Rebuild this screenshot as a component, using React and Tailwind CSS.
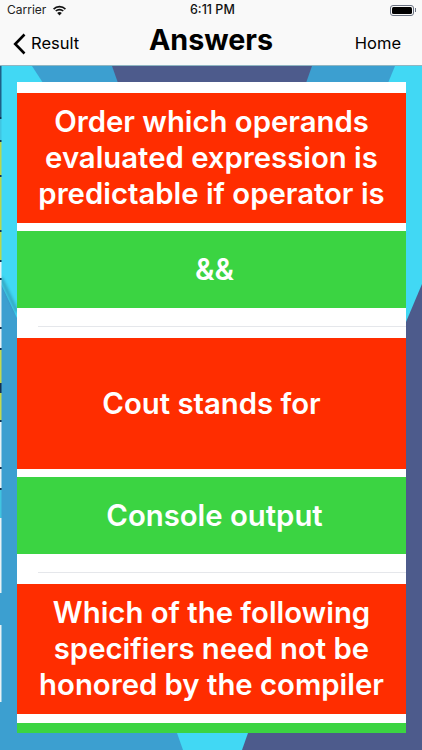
import React from "react";

const font = { fontFamily: "Inter" };

// thin strip of another picture showing along the left edge
const edgeStrip = [
  [0, 51, "#1f5f86"],
  [51, 2, "#14304f"],
  [53, 21, "#41c4e0"],
  [74, 2, "#14304f"],
  [76, 33, "#b9d64e"],
  [109, 2, "#14304f"],
  [111, 53, "#b9d64e"],
  [164, 2, "#14304f"],
  [166, 28, "#b9d64e"],
  [194, 2, "#14304f"],
  [196, 16, "#e8f2f4"],
  [212, 2, "#14304f"],
  [214, 47, "#e8f2f4"],
  [261, 2, "#14304f"],
  [263, 19, "#e8f2f4"],
  [282, 2, "#14304f"],
  [284, 33, "#c4d84e"],
  [317, 10, "#14304f"],
  [327, 27, "#c4d84e"],
  [354, 2, "#14304f"],
  [356, 45, "#e8f2f4"],
  [401, 2, "#14304f"],
  [403, 19, "#e8f2f4"],
  [422, 2, "#14304f"],
  [424, 28, "#41c4e0"],
  [452, 75, "#e8f2f4"],
  [559, 77, "#e8f2f4"],
];

const Background = () => (
  <svg className="absolute inset-0 w-full h-full" viewBox="0 0 422 684" preserveAspectRatio="none">
    <defs>
      <filter id="soft" x="-50%" y="-50%" width="200%" height="200%">
        <feGaussianBlur stdDeviation="1.600" />
      </filter>
    </defs>
    <rect width="422" height="684" fill="#41d8f4" />
    <path d="M32 0H395L388 17H43Z" fill="#3c9fd0" />
    <path d="M112 0H312L306 17H118Z" fill="#4d5b8c" />
    <path d="M0 216L17 252V684H0Z" fill="#3c9fd0" />
    <path d="M17 660H190V684H17Z" fill="#3c9fd0" />
    <path d="M422 218L406 256V684H422Z" fill="#4d5b8c" />
    <path d="M230 660H406V684H230Z" fill="#4d5b8c" />
    <path d="M177 667H248L242 684H183Z" fill="#41d8f4" />
    <path d="M1 212L17 246" stroke="#1d4a66" strokeWidth="3" opacity="0.4" filter="url(#soft)" />
    {edgeStrip.map(([y, h, fill]) => (
      <rect key={y} x="0" y={y} width="1.500" height={h} fill={fill} />
    ))}
  </svg>
);

const Block = ({ color, height, children }) => (
  <div className={`${color} ${height} flex items-center justify-center text-center text-white font-semibold text-[29.3px] leading-[36px] px-2`}>
    <span>{children}</span>
  </div>
);

const GreenBlock = ({ children }) => (
  <div className="bg-[#3bd442] h-[77px] flex items-center justify-center text-white font-semibold text-[29.3px] leading-[36px] pl-[14px] pr-2">
    <span>{children}</span>
  </div>
);

const Gap = () => (
  <div className="h-[30px] bg-white pt-[18px] pl-[21px]">
    <div className="h-px bg-gray-200" />
  </div>
);

const App = () => {
  return (
    <div className="w-[422px] h-[750px] overflow-hidden flex flex-col bg-white" style={font}>
      <header className="h-[66px] shrink-0 bg-[#f9f9f9] text-black border-b border-[#8fb6c2]">
        <div className="h-5 flex items-center justify-between pl-[7px] pr-[6px] text-xs relative">
          <div className="flex items-center gap-[6px]">
            <span className="text-[#222]">Carrier</span>
            <svg width="15" height="11" viewBox="0 0 15 11" fill="#111">
              <path d="M7.5 2.6c2 0 3.9.8 5.3 2.1l1.200-1.300A9.200 9.200 0 0 0 7.500 .8 9.200 9.200 0 0 0 1 3.400l1.200 1.300a7.700 7.700 0 0 1 5.300-2.100z" />
              <path d="M7.500 5.400c1.200 0 2.300.5 3.200 1.200l1.100-1.200a6.200 6.200 0 0 0-8.600 0l1.100 1.200c.9-.7 2-1.200 3.200-1.200z" />
              <path d="M7.500 10.500l2.300-2.500a3.100 3.100 0 0 0-4.600 0z" />
            </svg>
          </div>
          <span className="absolute left-[190px] font-medium text-[#111] text-[12.5px]">6:11 PM</span>
          <div className="flex items-center">
            <div className="w-6 h-[11px] rounded-[3px] border border-gray-500 p-px">
              <div className="w-full h-full rounded-[1.5px] bg-black" />
            </div>
            <div className="w-px h-1 bg-gray-500 ml-px" />
          </div>
        </div>
        <div className="h-[45px] flex items-center justify-between relative text-[16.5px] pl-[13px] pr-[21px] pt-[2px]">
          <div className="flex items-center gap-[5px]">
            <svg width="13" height="22" viewBox="0 0 13 22" fill="none" stroke="#000" strokeWidth="2.600">
              <path d="M11.500 1.500L2.200 11l9.300 9.500" />
            </svg>
            <span>Result</span>
          </div>
          <h1 className="absolute left-0 right-0 -top-[3px] text-center text-[28.7px] leading-[45px] font-bold pointer-events-none">Answers</h1>
          <span>Home</span>
        </div>
      </header>

      <main className="relative flex-1 pt-4 pl-[17px]">
        <Background />
        <div className="relative w-[389px] h-[651px] overflow-hidden bg-white pt-[11px]">
          <Block color="bg-[#ff2d00]" height="h-[130px]">
            Order which operands<br />evaluated expression is<br />predictable if operator is
          </Block>
          <div className="h-2 bg-white" />
          <GreenBlock>&amp;&amp;</GreenBlock>
          <Gap />
          <Block color="bg-[#ff2d00]" height="h-[131px]">Cout stands for</Block>
          <div className="h-2 bg-white" />
          <GreenBlock>Console output</GreenBlock>
          <Gap />
          <Block color="bg-[#ff2d00]" height="h-[130px]">
            Which of the following<br />specifiers need not be<br />honored by the compiler
          </Block>
          <div className="h-[9px] bg-white" />
          <div className="h-[77px] bg-[#3bd442]" />
        </div>
      </main>
    </div>
  );
};

export default App;
